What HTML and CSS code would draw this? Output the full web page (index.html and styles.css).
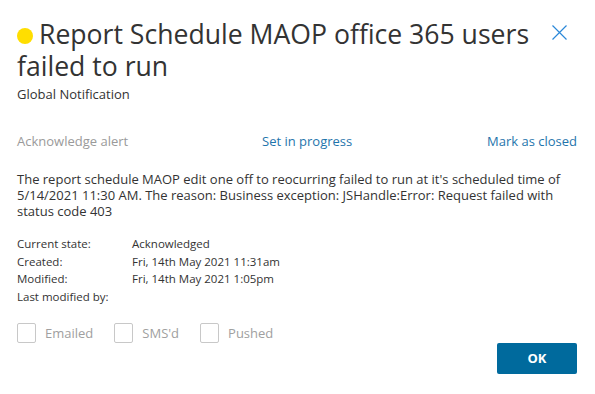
FILE: index.html
```html
<!DOCTYPE html>
<html>
<head>
<meta charset="utf-8">
<link rel="stylesheet" href="styles.css">
</head>
<body>
<div class="dialog">
  <div class="header">
    <h1 class="title"><span class="dot"></span>Report Schedule MAOP office 365 users failed to run</h1>
    <button class="close" aria-label="Close">
      <svg width="15" height="15" viewBox="0 0 15 15"><path d="M0.5 0.5 L14.5 14.5 M14.5 0.5 L0.5 14.5" stroke="#2b88d8" stroke-width="1.2" fill="none"/></svg>
    </button>
  </div>
  <div class="subtitle">Global Notification</div>
  <div class="actions">
    <span class="action disabled">Acknowledge alert</span>
    <a class="action link">Set in progress</a>
    <a class="action link right">Mark as closed</a>
  </div>
  <p class="message">The report schedule MAOP edit one off to reocurring failed to run at it's scheduled time of 5/14/2021 11:30 AM. The reason: Business exception: JSHandle:Error: Request failed with status code 403</p>
  <div class="details">
    <div class="label">Current state:</div><div class="value">Acknowledged</div>
    <div class="label">Created:</div><div class="value">Fri, 14th May 2021 11:31am</div>
    <div class="label">Modified:</div><div class="value">Fri, 14th May 2021 1:05pm</div>
    <div class="label">Last modified by:</div><div class="value"></div>
  </div>
  <div class="checks">
    <label class="check"><span class="box"></span>Emailed</label>
    <label class="check"><span class="box"></span>SMS'd</label>
    <label class="check"><span class="box"></span>Pushed</label>
  </div>
  <div class="footer">
    <button class="ok">OK</button>
  </div>
</div>
</body>
</html>
```
FILE: styles.css
```css
html, body {
  margin: 0;
  padding: 0;
  background: #fff;
}
body {
  font-family: "Open Sans", "Noto Sans", sans-serif;
  color: #333;
  width: 595px;
  height: 394px;
  overflow: hidden;
}
.dialog {
  padding: 18px 18px 0 17px;
}
.header {
  display: flex;
  justify-content: space-between;
  align-items: flex-start;
}
.title {
  margin: 0;
  font-weight: 400;
  font-size: 26.6px;
  line-height: 32px;
  color: #333;
  width: 525px;
}
.dot {
  display: inline-block;
  width: 16px;
  height: 16px;
  border-radius: 50%;
  background: #ffde00;
  margin-right: 6px;
  vertical-align: 0px;
}
.close {
  border: 0;
  background: none;
  padding: 0;
  margin-top: 7px;
  margin-right: 10px;
  width: 15px;
  height: 15px;
  display: block;
}
.close svg { display: block; }
.subtitle {
  font-size: 13px;
  line-height: 16px;
  margin-top: 4px;
  color: #333;
}
.actions {
  display: grid;
  grid-template-columns: 245px 1fr auto;
  margin-top: 30px;
  font-size: 13px;
  line-height: 18px;
}
.action.disabled { color: #9a9a9a; }
.action.link { color: #1f75ac; }
.message {
  margin: 21px 0 0;
  font-size: 13px;
  line-height: 16px;
  color: #333;
}
.details {
  display: grid;
  grid-template-columns: 115px 1fr;
  margin-top: 16px;
  font-size: 11.5px;
  line-height: 17.7px;
  color: #333;
}
.checks {
  display: flex;
  gap: 21px;
  margin-top: 17px;
}
.check {
  display: flex;
  align-items: center;
  font-size: 13px;
  color: #a0a0a0;
}
.box {
  border: 1px solid #c8c8c8;
  border-radius: 2px;
  margin-right: 9px;
  box-sizing: border-box;
  width: 19px;
  height: 20px;
}
.footer {
  display: flex;
  justify-content: flex-end;
  margin-top: 0;
}
.ok {
  width: 80px;
  height: 31px;
  border: 0;
  border-radius: 2px;
  background: #006a9d;
  color: #fff;
  font-family: "Open Sans", "Noto Sans", sans-serif;
  font-weight: 700;
  font-size: 13px;
}
```
